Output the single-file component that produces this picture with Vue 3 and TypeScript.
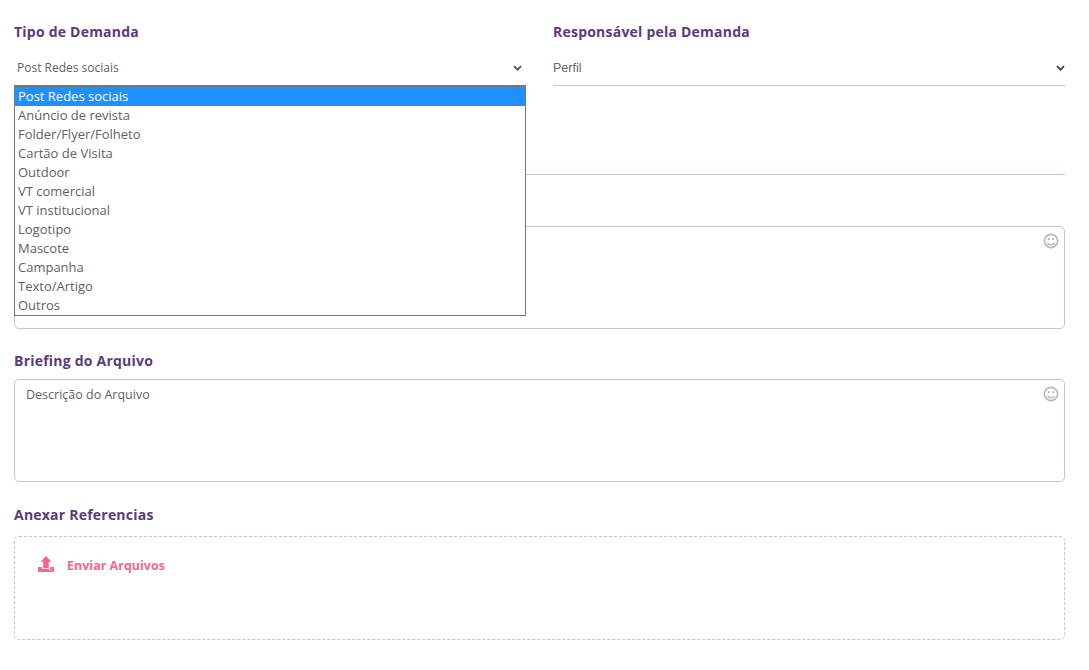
<template>
  <div class="form-page">
    <div class="two-cols">
      <div class="field">
        <label class="field-label">Tipo de Demanda</label>
        <div class="select-box">
          <span class="select-value">Post Redes sociais</span>
          <svg class="chevron" viewBox="0 0 10 7"><path d="M1 1.3 5 5.2 9 1.3" /></svg>
          <ul class="select-list">
            <li v-for="(item, i) in demandTypes" :key="item" :class="{ selected: i === 0 }">{{ item }}</li>
          </ul>
        </div>
      </div>
      <div class="field">
        <label class="field-label">Responsável pela Demanda</label>
        <div class="select-box profile">
          <span class="select-value">Perfil</span>
          <svg class="chevron" viewBox="0 0 10 7"><path d="M1 1.3 5 5.2 9 1.3" /></svg>
        </div>
      </div>
    </div>

    <div class="plain-line"></div>

    <div class="text-area first">
      <svg class="smile" viewBox="0 0 16 16">
        <circle cx="8" cy="8" r="6.6" />
        <circle class="eye" cx="5.8" cy="6.2" r="1.1" />
        <circle class="eye" cx="10.2" cy="6.2" r="1.1" />
        <path d="M4.4 9.8c.8 1.4 2.1 2 3.6 2s2.8-.6 3.6-2" />
      </svg>
    </div>

    <label class="field-label spaced">Briefing do Arquivo</label>
    <div class="text-area">
      <span class="placeholder">Descrição do Arquivo</span>
      <svg class="smile" viewBox="0 0 16 16">
        <circle cx="8" cy="8" r="6.6" />
        <circle class="eye" cx="5.8" cy="6.2" r="1.1" />
        <circle class="eye" cx="10.2" cy="6.2" r="1.1" />
        <path d="M4.4 9.8c.8 1.4 2.1 2 3.6 2s2.8-.6 3.6-2" />
      </svg>
    </div>

    <label class="field-label spaced attach">Anexar Referencias</label>
    <div class="upload-box">
      <svg class="upload-icon" viewBox="0 0 16 16">
        <path d="M8 0 13.5 5.7H10.8V12H5.2V5.7H2.5Z" />
        <path fill-rule="evenodd" d="M0 11H3.8V12.8H12.2V11H16V16H0ZM11.4 13.6V14.6H12.4V13.6ZM13.2 13.6V14.6H14.2V13.6Z" />
      </svg>
      <span class="upload-text">Enviar Arquivos</span>
    </div>
  </div>
</template>

<script setup lang="ts">
const demandTypes: string[] = [
  'Post Redes sociais',
  'Anúncio de revista',
  'Folder/Flyer/Folheto',
  'Cartão de Visita',
  'Outdoor',
  'VT comercial',
  'VT institucional',
  'Logotipo',
  'Mascote',
  'Campanha',
  'Texto/Artigo',
  'Outros',
]
</script>

<style>
body {
  background: #fff;
}
</style>

<style scoped>
.form-page {
  width: 1051px;
  height: 670px;
  box-sizing: border-box;
  padding: 22px 0 0;
  margin-left: 14px;
  font-family: "Open Sans", sans-serif;
  color: #5f5f5f;
}

.two-cols {
  display: grid;
  grid-template-columns: 511px 512px;
  column-gap: 28px;
}

.field-label {
  display: block;
  height: 20px;
  line-height: 20px;
  font-size: 14px;
  font-weight: 700;
  letter-spacing: 0.22px;
  color: #5b3a7d;
}

.select-box {
  position: relative;
  display: flex;
  align-items: center;
  justify-content: space-between;
  box-sizing: border-box;
  height: 36px;
  margin-top: 8px;
  padding: 0 3px;
  border-bottom: 1px solid #c9c0dc;
  font-size: 12px;
}

.select-box.profile {
  padding: 0;
  font-family: "Liberation Sans", sans-serif;
  font-size: 12.5px;
  color: #666;
}

.chevron {
  width: 9px;
  height: 6.3px;
  margin-top: 2px;
  fill: none;
  stroke: #555;
  stroke-width: 2;
}

.select-box.profile .chevron {
  stroke: #3f3a6b;
  margin-right: 0;
}

.select-list {
  position: absolute;
  top: 35px;
  left: 0;
  z-index: 5;
  width: 512px;
  box-sizing: border-box;
  margin: 0;
  padding: 0;
  list-style: none;
  background: #fff;
  border: 1px solid #767676;
  border-top-width: 2px;
  font-size: 13px;
}

.select-list li {
  height: 19px;
  line-height: 19px;
  padding-left: 3px;
  white-space: nowrap;
}

.select-list li.selected {
  background: #1e90ff;
  color: #fff;
}

.plain-line {
  margin-top: 88px;
  height: 1px;
  background: #c9c0dc;
}

.text-area {
  position: relative;
  box-sizing: border-box;
  height: 103px;
  padding: 6px 11px;
  border: 1px solid #c9c0dc;
  border-radius: 5px;
  font-size: 12.5px;
  line-height: 18px;
}

.text-area.first {
  margin-top: 51px;
}

.smile {
  position: absolute;
  top: 6px;
  right: 5px;
  width: 16px;
  height: 16px;
  fill: none;
  stroke: #b8b8b8;
  stroke-width: 1.6;
}

.smile .eye {
  fill: #b8b8b8;
  stroke: none;
}

.spaced {
  margin-top: 22px;
  margin-bottom: 8px;
}

.attach {
  margin-top: 23px;
  margin-bottom: 11px;
}

.upload-box {
  display: flex;
  align-items: flex-start;
  box-sizing: border-box;
  height: 104px;
  padding: 19px 0 0 23px;
  border: 1px dashed #c9c0dc;
  border-radius: 5px;
}

.upload-icon {
  width: 16px;
  height: 16px;
  fill: #fb6391;
}

.upload-text {
  margin-left: 13px;
  margin-top: 1px;
  line-height: 18px;
  font-size: 12.5px;
  font-weight: 700;
  color: #fb6391;
}
</style>
